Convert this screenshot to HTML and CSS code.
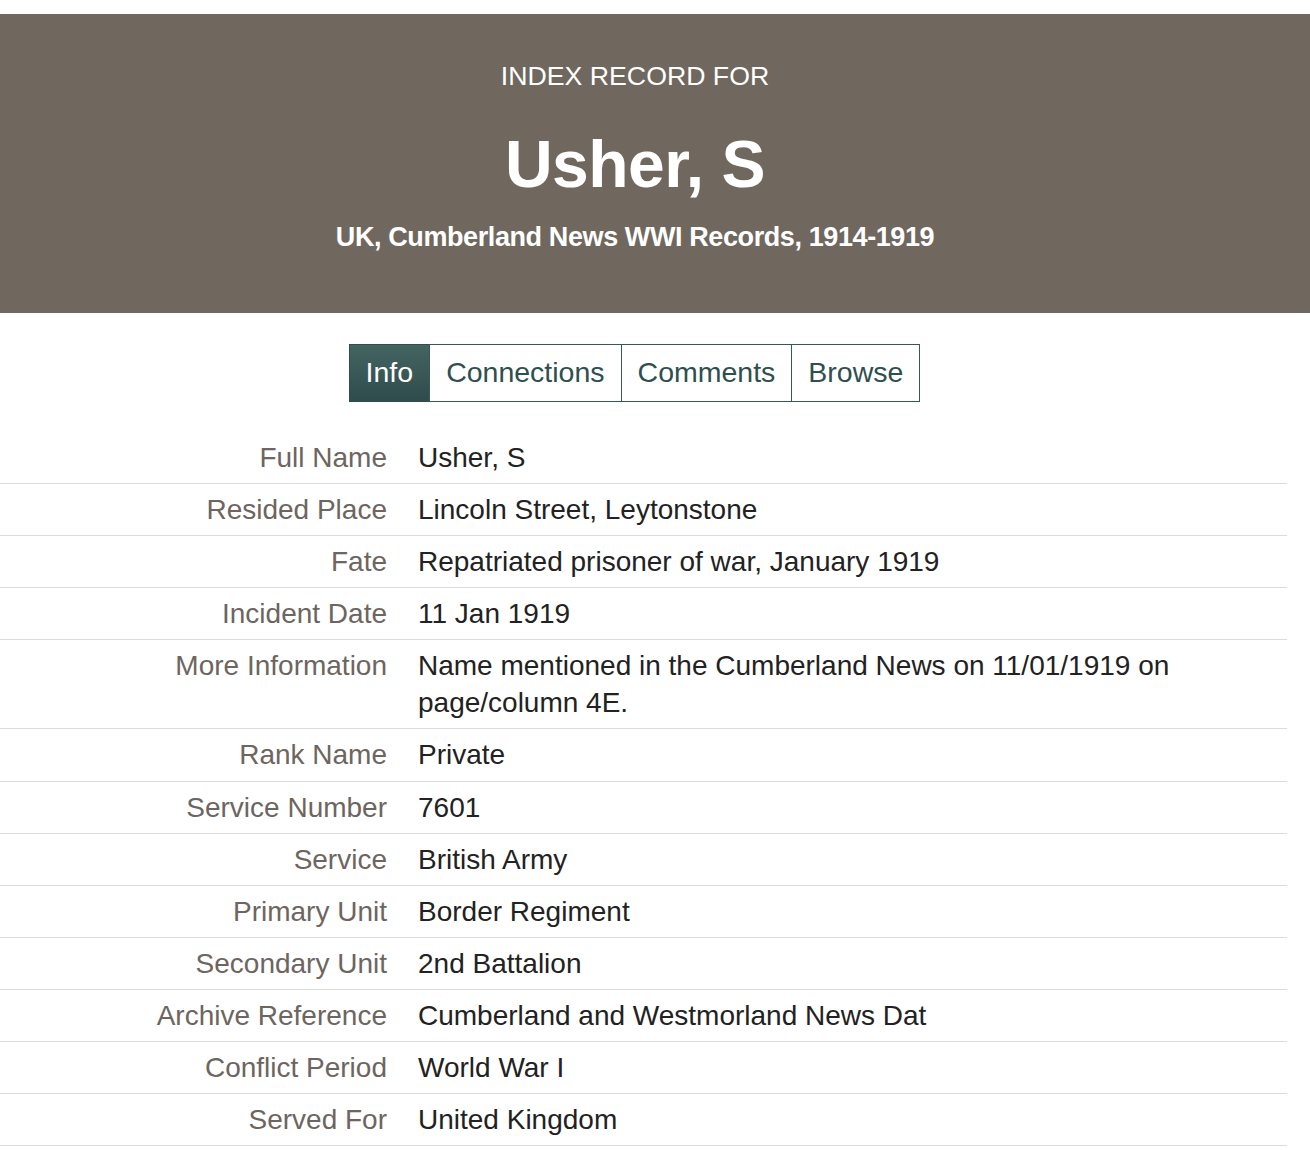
FILE: index.html
```html
<!DOCTYPE html>
<html lang="en">
<head>
<meta charset="utf-8">
<title>Usher, S - Index Record</title>
<link rel="stylesheet" href="styles.css">
</head>
<body>
<header class="hero">
  <div class="hero-kicker">INDEX RECORD FOR</div>
  <h1 class="hero-title">Usher, S</h1>
  <div class="hero-sub">UK, Cumberland News WWI Records, 1914-1919</div>
</header>
<nav class="tabs">
  <a class="tab active">Info</a>
  <a class="tab">Connections</a>
  <a class="tab">Comments</a>
  <a class="tab">Browse</a>
</nav>
<table class="record">
  <tr><th>Full Name</th><td>Usher, S</td></tr>
  <tr><th>Resided Place</th><td>Lincoln Street, Leytonstone</td></tr>
  <tr><th>Fate</th><td>Repatriated prisoner of war, January 1919</td></tr>
  <tr><th>Incident Date</th><td>11 Jan 1919</td></tr>
  <tr><th>More Information</th><td><div class="wrap">Name mentioned in the Cumberland News on 11/01/1919 on page/column 4E.</div></td></tr>
  <tr><th>Rank Name</th><td>Private</td></tr>
  <tr><th>Service Number</th><td>7601</td></tr>
  <tr><th>Service</th><td>British Army</td></tr>
  <tr><th>Primary Unit</th><td>Border Regiment</td></tr>
  <tr><th>Secondary Unit</th><td>2nd Battalion</td></tr>
  <tr><th>Archive Reference</th><td>Cumberland and Westmorland News Dat</td></tr>
  <tr><th>Conflict Period</th><td>World War I</td></tr>
  <tr><th>Served For</th><td>United Kingdom</td></tr>
</table>
</body>
</html>
```

FILE: styles.css
```css
* { box-sizing: border-box; }
html, body { margin: 0; padding: 0; background: #fff; }
body {
  font-family: "Liberation Sans", Arial, sans-serif;
  padding-top: 14px;
  width: 1310px;
}
.hero {
  background: #70685e;
  color: #fff;
  text-align: center;
  height: 299px;
  padding-top: 44px;
  padding-right: 40px;
}
.hero-kicker {
  font-size: 26.7px;
  line-height: 36px;
}
.hero-title {
  margin: 0;
  font-size: 66px;
  font-weight: bold;
  line-height: 88px;
  margin-top: 26px;
  letter-spacing: -0.5px;
}
.hero-sub {
  font-size: 27px;
  font-weight: bold;
  line-height: 36px;
  margin-top: 11px;
  letter-spacing: -0.4px;
}
.tabs {
  display: flex;
  justify-content: center;
  margin-top: 31px;
  padding-right: 40px;
}
.tab {
  display: block;
  border: 1px solid #3a5756;
  margin-left: -1px;
  padding: 0 16px;
  height: 58px;
  line-height: 55px;
  font-size: 28.5px;
  color: #2f4f4f;
  background: #fff;
}
.tab.active {
  background: linear-gradient(#446462, #2e4c4b);
  color: #fff;
  border-color: #2f4f4f;
}
.record {
  border-collapse: collapse;
  width: 1287px;
  margin-top: 30px;
  font-size: 28px;
  line-height: 37px;
}
.record tr { border-bottom: 1px solid #dcdcdc; }
.record th {
  width: 402px;
  text-align: right;
  font-weight: normal;
  color: #6d655f;
  padding: 7px 15px 7.1px 0;
  vertical-align: top;
  white-space: nowrap;
}
.record td {
  color: #222;
  padding: 7px 0 7.1px 16px;
  vertical-align: top;
}
.wrap { max-width: 780px; }
```
